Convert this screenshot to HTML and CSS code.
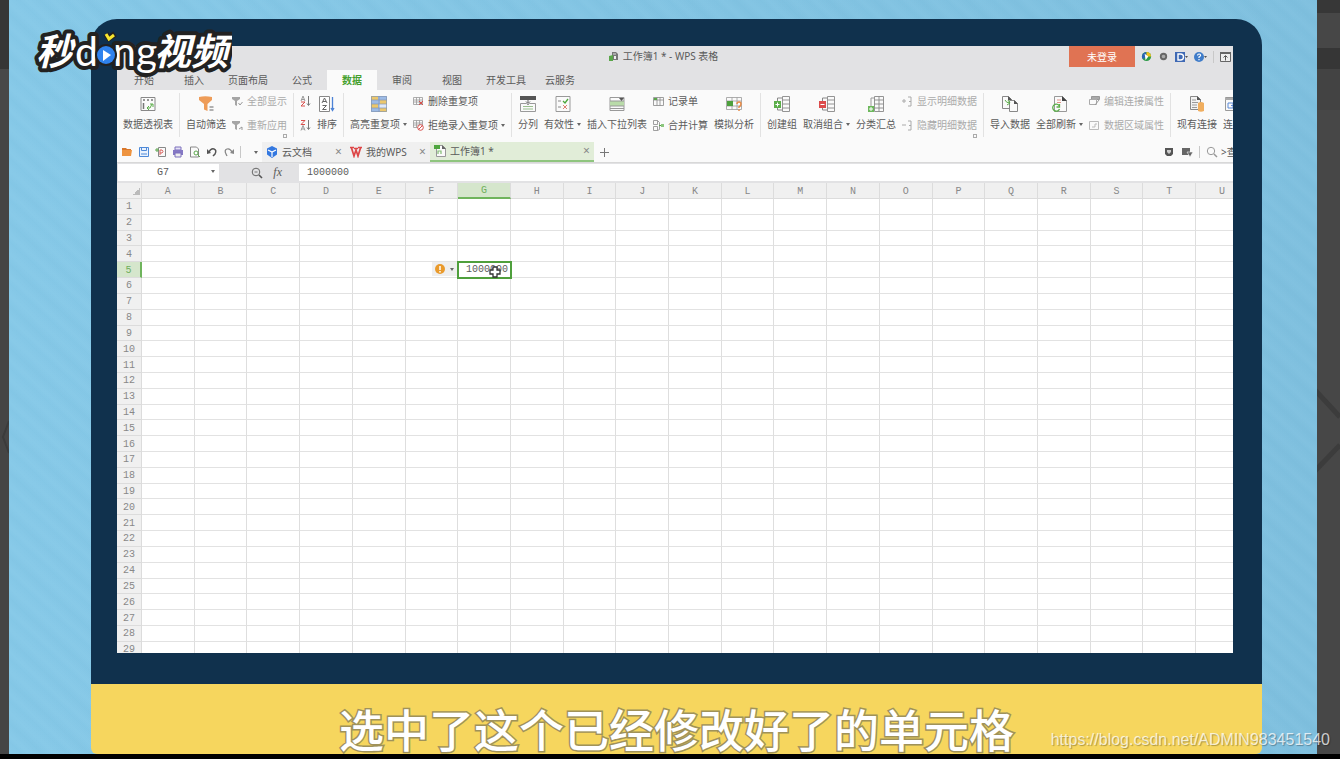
FILE: index.html
```
<!DOCTYPE html>
<html lang="zh-CN">
<head>
    <meta charset="UTF-8">
    <meta name="viewport" content="width=device-width, initial-scale=1.0">
    <title>工作簿1 - WPS 表格</title>
    <link rel="stylesheet" href="styles.css">
</head>
<body>
    <div class="stage">
        <div class="gutter gutter-left">
            <svg width="9" height="40" viewBox="0 0 9 40"><path d="M9 4L3 20L9 36" fill="none" stroke="#3b3b3b" stroke-width="2"/></svg>
        </div>
        <main class="video">
            <div class="frame">
                <div class="screen">
                    <!-- title bar -->
                    <div class="title-bar">
                        <div class="title">
                            <svg width="11" height="11" viewBox="0 0 11 11"><path d="M4 1h4l2 2v6H4z" fill="#777"/><path d="M5 3h3" stroke="#ddd"/><path d="M1 5l4-1v6H1z" fill="#5aa64a"/><path d="M6 5h2v3H6z" fill="#eee"/></svg>
                            <span>工作簿1 * - WPS 表格</span>
                        </div>
                        <div class="title-tools">
                            <button class="login">未登录</button>
                            <button aria-label="皮肤"><svg width="11" height="11" viewBox="0 0 12 12"><circle cx="6" cy="6" r="5" fill="#2d9a49"/><path d="M6 1A5 5 0 0 0 2 9L6 6z" fill="#2b62b5"/><path d="M6 1a5 5 0 0 1 5 5L6 6z" fill="#f2c11d"/><path d="M4 3l4 3-3 4z" fill="#fff"/></svg></button>
                            <button aria-label="设置"><svg width="11" height="11" viewBox="0 0 12 12"><circle cx="6" cy="6" r="3" fill="#aaa" stroke="#666" stroke-width="2"/></svg></button>
                            <button aria-label="文档"><svg width="13" height="12" viewBox="0 0 13 12"><path d="M0 1h10v10H0z" fill="#3f69b4"/><path d="M3 3h2.500q3 0 3 3t-3 3H3z" fill="none" stroke="#fff" stroke-width="1.400"/><path d="M10 5h3l-1.500 2z" fill="#555"/></svg></button>
                            <button aria-label="帮助"><svg width="13" height="12" viewBox="0 0 13 12"><circle cx="5" cy="6" r="5" fill="#3f7cc9"/><path d="M3.500 4.500q.2-1.500 1.600-1.500t1.500 1.300Q6.500 5.300 5 6v1M5 8v1.200" fill="none" stroke="#fff" stroke-width="1.200"/><path d="M10 5h3l-1.500 2z" fill="#555"/></svg></button>
                            <span class="split"></span>
                            <button aria-label="隐藏功能区"><svg width="11" height="12" viewBox="0 0 11 12"><path d="M.5 1.500h10v9H.5z" fill="#eee" stroke="#666"/><path d="M0 2h11" stroke="#666" stroke-width="2"/><path d="M5.500 9.500V5M3.500 6.500l2-2 2 2" fill="none" stroke="#555"/></svg></button>
                        </div>
                    </div>

                    <!-- menu tabs -->
                    <nav class="menu-tabs">
                        <button>开始</button>
                        <button>插入</button>
                        <button>页面布局</button>
                        <button>公式</button>
                        <button class="active">数据</button>
                        <button>审阅</button>
                        <button>视图</button>
                        <button>开发工具</button>
                        <button>云服务</button>
                    </nav>

                    <!-- ribbon -->
                    <div class="ribbon">
                        <div class="group">
                            <button class="big">
                                <svg viewBox="0 0 16 16"><path d="M1 1.500h14v13H1z" fill="#fbfbfb" stroke="#888"/><path d="M3 4h2M7 4h2M11 4h2M3.500 7v6" stroke="#777" stroke-width="1.500"/><path d="M7 12h3l2-4M7 12l2-2M7 12l2 2M10 8h3v3" fill="none" stroke="#5cae4a"/></svg>
                                <span>数据透视表</span>
                            </button>
                        </div>
                        <div class="group">
                            <button class="big">
                                <svg viewBox="0 0 16 16"><path d="M1 1q6-1.500 13 0v3L9.500 8v7L6 13.500V8L1 4z" fill="#ee9c58"/><path d="M11.500 11h4M11.500 14h4" stroke="#666"/></svg>
                                <span>自动筛选</span>
                            </button>
                            <div class="stack">
                                <button class="small off"><svg viewBox="0 0 11 11"><path d="M0 1h8v2L5 5v5L3 9V5L0 3z" fill="#a5a5a5"/><path d="M6.500 7l1.500 2 2.500-3" fill="none" stroke="#999"/></svg>全部显示</button>
                                <button class="small off"><svg viewBox="0 0 11 11"><path d="M0 1h8v2L5 5v5L3 9V5L0 3z" fill="#a5a5a5"/><path d="M7 9l3-2v3" fill="none" stroke="#999"/></svg>重新应用</button>
                            </div>
                            <span class="launcher"></span>
                        </div>
                        <div class="group">
                            <div class="stack">
                                <button class="small" aria-label="升序"><svg viewBox="0 0 11 11"><path d="M1 5l2-5 2 5M1.500 3.500h3" fill="none" stroke="#999"/><path d="M1 6h4l-4 4h4" fill="none" stroke="#d8504c"/><path d="M8.500 0v9M7 7.500l1.500 2L10 7.500" fill="none" stroke="#777"/></svg></button>
                                <button class="small" aria-label="降序"><svg viewBox="0 0 11 11"><path d="M1 .5h4l-4 4h4" fill="none" stroke="#d8504c"/><path d="M1 10.500l2-5 2 5M1.500 9h3" fill="none" stroke="#999"/><path d="M8.500 0v9M7 7.500l1.500 2L10 7.500" fill="none" stroke="#777"/></svg></button>
                            </div>
                            <button class="big">
                                <svg viewBox="0 0 16 16"><path d="M.5.5h10v15H.5z" fill="#fff" stroke="#888"/><path d="M3 7l2.500-5L8 7M4 5.500h3M3.500 9.500h4l-4 4h4" fill="none" stroke="#666"/><path d="M13.500 1v13M12 12l1.500 2.500L15 12" fill="none" stroke="#4d83d6" stroke-width="1.300"/></svg>
                                <span>排序</span>
                            </button>
                        </div>
                        <div class="group">
                            <button class="big">
                                <svg viewBox="0 0 16 16"><path d="M0 0h16v16H0z" fill="#9dbbe6"/><path d="M0 0h7v4H0zM9 4h7v4H9zM0 8h7v4H0zM9 12h7v4H9z" fill="#ecc76c"/><path d="M8 8h8v4H8z" fill="#dfe9f8"/><path d="M0 4h16M0 8h16M0 12h16M8 0v16M.5.5h15v15H.5z" fill="none" stroke="#8497b0" stroke-width=".7"/></svg>
                                <span class="drop">高亮重复项</span>
                            </button>
                            <div class="stack">
                                <button class="small"><svg viewBox="0 0 11 11"><path d="M.5 1.500h9v7h-9zM.5 4h9M.5 6h9M3.500 1.500v7M6.500 1.500v7" fill="#fafafa" stroke="#999" stroke-width=".8"/><path d="M6 5l4 4M10 5l-4 4" stroke="#d8504c"/></svg>删除重复项</button>
                                <button class="small"><svg viewBox="0 0 11 11"><path d="M.5.5h9v7h-9zM.5 3h9M.5 5h9M3.500.5v7M6.500.5v7" fill="#fafafa" stroke="#999" stroke-width=".8"/><circle cx="7.500" cy="7.500" r="2.800" fill="#fff" stroke="#d8504c"/><path d="M5.500 9.500l4-4" stroke="#d8504c"/></svg><span class="drop">拒绝录入重复项</span></button>
                            </div>
                        </div>
                        <div class="group">
                            <button class="big">
                                <svg viewBox="0 0 16 16"><path d="M0 0h16v4H0z" fill="#555"/><path d="M8 4v3M6 5.500l2 2 2-2" fill="none" stroke="#666"/><path d="M.5 7.500h6L8 9l1.500-1.500h6v8H.5z" fill="#fafafa" stroke="#999"/><path d="M3 10.500h10M3 13h10" stroke="#9ac08e"/></svg>
                                <span>分列</span>
                            </button>
                            <button class="big">
                                <svg viewBox="0 0 16 16"><path d="M1 .5h14v15H1z" fill="#fafafa" stroke="#999"/><path d="M8 5l2 2 3-4" fill="none" stroke="#4da63c" stroke-width="1.300"/><path d="M8 9l4 4M12 9l-4 4" stroke="#df7d72"/><path d="M3 5h3M3 11h3" stroke="#888"/></svg>
                                <span class="drop">有效性</span>
                            </button>
                            <button class="big">
                                <svg viewBox="0 0 16 16"><path d="M1 1.500h14v13H1z" fill="#fafafa" stroke="#999"/><path d="M1 5h14v5H1z" fill="#b9dba9"/><path d="M1 5h14M1 10h14M1 12.500h14" stroke="#999"/><path d="M10 2h5l-2.500 3z" fill="#555"/></svg>
                                <span>插入下拉列表</span>
                            </button>
                            <div class="stack">
                                <button class="small"><svg viewBox="0 0 11 11"><path d="M.5 1.500h10v8H.5zM.5 4h10M4 1.500v8M7 1.500v8" fill="#fafafa" stroke="#888" stroke-width=".8"/><path d="M1 2h3v2H1z" fill="#5aa64a"/></svg>记录单</button>
                                <button class="small"><svg viewBox="0 0 11 11"><path d="M.5.5h4v4h-4zM.5 6.500h4v4h-4zM4.500.5l2 2v7l-2 1" fill="#fafafa" stroke="#888" stroke-width=".8"/><path d="M6 5.500h3" stroke="#5aa64a"/><path d="M8 4h3v3H8z" fill="#8bc67d"/></svg>合并计算</button>
                            </div>
                            <button class="big">
                                <svg viewBox="0 0 16 16"><path d="M.5 1.500h15v12H.5zM.5 5h15M.5 10h15M6 1.500v12M11 1.500v12" fill="#fafafa" stroke="#999" stroke-width=".8"/><path d="M1 5h6v5H1z" fill="#4da03d"/><path d="M11 8q0-2 2-2t2 2-2 3v1M13 13.500V15" fill="none" stroke="#e78b47" stroke-width="1.500"/></svg>
                                <span>模拟分析</span>
                            </button>
                        </div>
                        <div class="group">
                            <button class="big">
                                <svg viewBox="0 0 16 16"><path d="M8.500.5h7v15h-7zM8.500 4h7M8.500 8h7M8.500 12h7" fill="#fafafa" stroke="#888" stroke-width=".9"/><path d="M8 2H3.500v12H8" fill="none" stroke="#888"/><path d="M0 5h7v7H0z" fill="#5cae4a"/><path d="M3.500 6.500v4M1.500 8.500h4" stroke="#fff"/></svg>
                                <span>创建组</span>
                            </button>
                            <button class="big">
                                <svg viewBox="0 0 16 16"><path d="M8.500.5h7v15h-7zM8.500 4h7M8.500 8h7M8.500 12h7" fill="#fafafa" stroke="#888" stroke-width=".9"/><path d="M8 2H3.500v12H8" fill="none" stroke="#888"/><path d="M0 5h7v7H0z" fill="#dc4c4c"/><path d="M1.500 8.500h4" stroke="#fff"/></svg>
                                <span class="drop">取消组合</span>
                            </button>
                            <button class="big">
                                <svg viewBox="0 0 16 16"><path d="M6.500.5h9v15h-9zM6.500 4h9M6.500 8h9M6.500 12h9M11 .5v15" fill="#fafafa" stroke="#888" stroke-width=".9"/><path d="M6 2H3v8" fill="none" stroke="#999"/><path d="M0 10h6v6H0z" fill="#6db85c"/><path d="M3 11v4M1 13h4" stroke="#fff"/></svg>
                                <span>分类汇总</span>
                            </button>
                            <div class="stack">
                                <button class="small off"><svg viewBox="0 0 11 11"><path d="M0 5h4M2 3v4M6 1h3v9H6M7 5.500h2" fill="none" stroke="#aaa"/></svg>显示明细数据</button>
                                <button class="small off"><svg viewBox="0 0 11 11"><path d="M0 5h4M6 1h3v9H6M7 5.500h2" fill="none" stroke="#aaa"/></svg>隐藏明细数据</button>
                            </div>
                            <span class="launcher"></span>
                        </div>
                        <div class="group">
                            <button class="big">
                                <svg viewBox="0 0 16 16"><path d="M.5.5h6l3 3v9h-9z" fill="#fafafa" stroke="#888"/><path d="M7.500 4.500h5l3 3v8h-8z" fill="#fafafa" stroke="#888"/><path d="M6 0l4 4H6zM12 4l4 4h-4z" fill="#555"/><path d="M3 4q1 3 5 3M6 4l2 3-3 2" fill="none" stroke="#5cae4a"/></svg>
                                <span>导入数据</span>
                            </button>
                            <button class="big">
                                <svg viewBox="0 0 16 16"><path d="M2.500.5h8l4 4v11h-12z" fill="#fafafa" stroke="#999"/><path d="M10 0l5 5h-5z" fill="#444"/><path d="M5 4h4M5 6.500h4" stroke="#e0938a"/><path d="M7 9.500A3.500 3.500 0 1 0 7.500 13M7.500 8v3h-3" fill="none" stroke="#5cae4a" stroke-width="1.300"/></svg>
                                <span class="drop">全部刷新</span>
                            </button>
                            <div class="stack">
                                <button class="small off"><svg viewBox="0 0 11 11"><path d="M2.500.5h8v3h-8z" fill="#aaa" stroke="#999"/><path d="M.5 3.500h7v5h-7z" fill="#fafafa" stroke="#aaa"/><path d="M6 9l4-5" stroke="#999"/></svg>编辑连接属性</button>
                                <button class="small off"><svg viewBox="0 0 11 11"><path d="M.5 1.500h9v8h-9z" fill="#fafafa" stroke="#bbb"/><path d="M3 7h3V4h2" fill="none" stroke="#bbb"/></svg>数据区域属性</button>
                            </div>
                        </div>
                        <div class="group">
                            <button class="big">
                                <svg viewBox="0 0 16 16"><path d="M1.500.5h7l3 3v10h-10z" fill="#f2f2f2" stroke="#888"/><path d="M8 0l4 4H8z" fill="#555"/><path d="M3 4h4M3 6.500h6M3 9h5M3 11.500h5" stroke="#999"/><path d="M9 7q3-2 6 0v8q-3 1.500-6 0z" fill="#f0ae5f"/></svg>
                                <span>现有连接</span>
                            </button>
                            <button class="big">
                                <svg viewBox="0 0 16 16"><path d="M.5 1.500h15v13H.5z" fill="#fafafa" stroke="#999"/><path d="M0 3h16" stroke="#aaa" stroke-width="2"/><path d="M3 7h5v5H3zM6 9.500h6M10 7h5v5h-5z" fill="none" stroke="#5b8ad8"/></svg>
                                <span>连接</span>
                            </button>
                        </div>
                    </div>

                    <!-- quick access + document tabs -->
                    <div class="doc-bar">
                        <div class="quick">
                            <button aria-label="打开"><svg viewBox="0 0 12 12"><path d="M1 2h4l1 1h4v2H1z" fill="#d9772b"/><path d="M1 10V4h10l-1 6z" fill="#ee9440"/></svg></button>
                            <button aria-label="保存"><svg viewBox="0 0 12 12"><path d="M1.500 1.500h9v9h-9z" fill="#eaf2fd" stroke="#4f8ad8"/><path d="M3.500 1.500v3h5v-3M3 8h6" fill="none" stroke="#4f8ad8"/></svg></button>
                            <button aria-label="输出为PDF"><svg viewBox="0 0 12 12"><path d="M3.500 1.500h7v9h-7z" fill="#fafafa" stroke="#888"/><path d="M5 9V4h2q2 1.500 0 3H5" fill="none" stroke="#d9605c"/><path d="M0 4h4M2 2v4" stroke="#5aa64a"/></svg></button>
                            <button aria-label="打印"><svg viewBox="0 0 12 12"><path d="M3 1h6v3H3z" fill="#e5e2f5" stroke="#7d71bd"/><path d="M1 4h10v5H1z" fill="#8578c4"/><path d="M3 7h6v4H3z" fill="#eee" stroke="#7d71bd"/></svg></button>
                            <button aria-label="打印预览"><svg viewBox="0 0 12 12"><path d="M1.500 1h6l2 2v8h-8z" fill="#fafafa" stroke="#888"/><circle cx="7" cy="7" r="2" fill="#fff" stroke="#5aa64a"/><path d="M8.500 8.500L11 11" stroke="#5aa64a"/></svg></button>
                            <button aria-label="撤销"><svg viewBox="0 0 12 12"><path d="M3 6q2-4 5-3t1 5l-2 2" fill="none" stroke="#555" stroke-width="1.500"/><path d="M1 3v5l4-1z" fill="#555"/></svg></button>
                            <button aria-label="恢复"><svg viewBox="0 0 12 12"><path d="M9 6Q7 2 4 3T3 8l1 2" fill="none" stroke="#888" stroke-width="1.300"/><path d="M11 3v5L7 7z" fill="#888"/></svg></button>
                            <span class="split"></span>
                            <button class="more" aria-label="更多"></button>
                        </div>
                        <div class="doc-tabs">
                            <div class="doc-tab">
                                <button class="doc-name"><svg viewBox="0 0 12 12"><path d="M6 0l5 2.500v6L6 12 1 8.500v-6z" fill="#3478e0"/><path d="M2 4l4 2 4-2M6 6v5" fill="none" stroke="#fff" stroke-width="1.200"/></svg>云文档</button>
                                <button class="close" aria-label="关闭云文档">×</button>
                            </div>
                            <div class="doc-tab">
                                <button class="doc-name"><svg viewBox="0 0 12 12"><path d="M0 1.500h4M8 1.500h4M1.500 2l2.500 8 2-6 2 6 2.500-8M4 2.500h4" fill="none" stroke="#dd4647" stroke-width="1.700"/></svg>我的WPS</button>
                                <button class="close" aria-label="关闭我的WPS">×</button>
                            </div>
                            <div class="doc-tab current">
                                <button class="doc-name"><svg viewBox="0 0 12 12"><path d="M2.500.5h6l3 3v8h-9z" fill="#fafafa" stroke="#999"/><path d="M0 0h6v4H0z" fill="#4da63c"/><path d="M8 0l4 4H8z" fill="#666"/><path d="M4 9V6h3v3" fill="none" stroke="#82bd72" stroke-width="1.200"/></svg>工作簿1 *</button>
                                <button class="close" aria-label="关闭工作簿1">×</button>
                            </div>
                            <button class="add" aria-label="新建"><svg width="11" height="11" viewBox="0 0 11 11"><path d="M5.500 1v9M1 5.500h9" stroke="#777"/></svg></button>
                        </div>
                        <div class="doc-tools">
                            <button aria-label="任务窗格"><svg viewBox="0 0 12 12"><path d="M2 2h8v6L8 10H4L2 8z" fill="#555"/><path d="M4 4h4v2L6 8 4 6z" fill="#ccc"/></svg></button>
                            <button aria-label="窗口列表"><svg viewBox="0 0 12 12"><path d="M1 2h8v7H1z" fill="#666"/><path d="M6 6h6L9 11z" fill="#666" stroke="#fafafa" stroke-width=".6"/></svg></button>
                            <span class="split"></span>
                            <button aria-label="查找"><svg viewBox="0 0 12 12"><circle cx="5" cy="5" r="3.700" fill="none" stroke="#999"/><path d="M8 8l3 3" stroke="#999" stroke-width="1.500"/></svg></button>
                            <span class="find">&gt;查</span>
                        </div>
                    </div>

                    <!-- formula bar -->
                    <div class="formula-bar">
                        <div class="name-box">
                            <input type="text" value="G7" aria-label="名称框">
                            <button class="more" aria-label="名称列表"></button>
                        </div>
                        <div class="formula-tools">
                            <button aria-label="浏览公式结果"><svg width="12" height="12" viewBox="0 0 12 12"><circle cx="5" cy="5" r="3.800" fill="none" stroke="#666"/><path d="M8 8l3 3" stroke="#555" stroke-width="1.600"/><path d="M3.500 5h3" stroke="#777"/></svg></button>
                            <button class="fx">fx</button>
                        </div>
                        <input class="formula" type="text" value="1000000" aria-label="编辑栏">
                    </div>

                    <div class="sheet">
                        <table id="grid"></table>
                    </div>
                </div>
            </div>
            <div class="caption">选中了这个已经修改好了的单元格</div>
        </main>
        <div class="gutter gutter-right">
            <svg width="23" height="90" viewBox="0 0 23 90"><path d="M-2 4L23 31M23 59L-2 85" fill="none" stroke="#3c3c3c" stroke-width="5"/></svg>
        </div>

        <svg class="logo" width="200" height="56" viewBox="0 0 200 56" role="img" aria-label="秒dong视频">
            <g class="logo-text">
                <text class="logo-cjk" x="4" y="39">秒</text>
                <text class="logo-latin" x="43" y="40">d</text>
                <text class="logo-latin" x="81" y="40">ng</text>
                <text class="logo-cjk" x="122" y="39">视频</text>
            </g>
            <circle cx="74" cy="29" r="11" fill="#222"/>
            <circle cx="74" cy="29" r="9" fill="#2f83ee"/>
            <path d="M71 24l8 5-8 6z" fill="#fff"/>
            <path d="M74 8l3 4 6-4" fill="none" stroke="#222" stroke-width="6"/>
            <path d="M74 8l3 5 5-4" fill="none" stroke="#f7e62e" stroke-width="3"/>
        </svg>
        <a class="watermark" href="https://blog.csdn.net/ADMIN983451540">https://blog.csdn.net/ADMIN983451540</a>
    </div>

    <script>
        const COLS = 'ABCDEFGHIJKLMNOPQRSTU'.split('');
        const ROWS = 29;
        const current = { col: 'G', row: 5, value: '1000000' };

        // Header row
        let html = '<thead><tr><th class="corner"></th>';
        COLS.forEach((c) => {
            html += '<th' + (c === current.col ? ' class="on"' : '') + '>' + c + '</th>';
        });
        html += '</tr></thead><tbody>';

        // Cells
        for (let r = 1; r <= ROWS; r++) {
            html += '<tr><th' + (r === current.row ? ' class="on"' : '') + '>' + r + '</th>';
            COLS.forEach((c) => {
                if (r === current.row && c === current.col) {
                    html += '<td class="selected"><div class="cell">' + current.value +
                        '<button class="warn" aria-label="错误检查"><svg width="10" height="10" viewBox="0 0 10 10"><circle cx="5" cy="5" r="5" fill="#e99a2c"/><path d="M5 2v4M5 7v1.500" stroke="#fff" stroke-width="1.500"/></svg><i class="arrow"></i></button>' +
                        '<svg class="cursor" width="12" height="12" viewBox="0 0 12 12"><path d="M4 1h4v3h3v4H8v3H4V8H1V4h3z" fill="#fff" stroke="#333" stroke-width="1.300"/></svg></div></td>';
                } else {
                    html += '<td></td>';
                }
            });
            html += '</tr>';
        }
        document.getElementById('grid').innerHTML = html + '</tbody>';
    </script>
</body>
</html>
```
FILE: styles.css
```
*,
*::after {
    box-sizing: border-box;
}

body {
    margin: 0;
    height: 100vh;
    padding-bottom: 5px;
    background: #000;
    overflow: hidden;
    font-family: "Noto Sans", "Noto Sans CJK SC", sans-serif;
    font-size: 10px;
    line-height: 14px;
    color: #5a5a5a;
}

button,
input {
    margin: 0;
    padding: 0;
    border: 0;
    background: none;
    font: inherit;
    color: inherit;
    white-space: nowrap;
}

svg {
    display: block;
    flex: none;
}

.stage {
    position: relative;
    display: flex;
    height: 100%;
}

/* dark strips on both sides of the video */
.gutter {
    flex: none;
    display: flex;
    align-items: center;
}

.gutter-left {
    width: 9px;
    padding-top: 120px;
    background: linear-gradient(#363636 69px, #484848 69px, #484848 110px, #454545 110px);
}

.gutter-right {
    width: 23px;
    padding-top: 108px;
    background: linear-gradient(#373737 13px, #474747 13px, #474747 48px, #363636 48px, #363636 69px, #434343 69px, #434343 110px, #474747 110px);
}

.video {
    flex: 1;
    min-width: 0;
    display: flex;
    flex-direction: column;
    padding: 19px 55px 0 82px;
    background:
        repeating-linear-gradient(42deg, rgba(255, 255, 255, 0.02) 0, rgba(0, 60, 90, 0.01) 9px, rgba(255, 255, 255, 0.02) 14px, rgba(0, 60, 90, 0.02) 23px, rgba(255, 255, 255, 0.02) 31px),
        linear-gradient(90deg, #86c9e8, #7fc0df);
}

.frame {
    flex: 1;
    min-height: 0;
    display: flex;
    padding: 27px 29px 31px 26px;
    border-radius: 26px 26px 0 0;
    background: #10314d;
}

.screen {
    flex: 1;
    min-width: 0;
    display: flex;
    flex-direction: column;
    overflow: hidden;
    background: #fafafa;
}

/* title bar */
.title-bar {
    flex: none;
    display: grid;
    grid-template-columns: 1fr auto 1fr;
    height: 24px;
    background: #e2e2e4;
}

.title {
    grid-column: 2;
    display: flex;
    align-items: center;
    gap: 4px;
    height: 20px;
    padding-right: 24px;
}

.title-tools {
    display: flex;
    justify-content: flex-end;
    align-items: center;
    gap: 6px;
    height: 21px;
    padding-right: 2px;
}

.login {
    width: 66px;
    height: 21px;
    background: #e07353;
    color: #fff;
}

.split {
    flex: none;
    width: 1px;
    height: 12px;
    background: #c8c8c8;
}

/* menu tabs */
.menu-tabs {
    flex: none;
    display: flex;
    height: 20px;
    padding-left: 2px;
    background: #e2e2e4;
}

.menu-tabs button {
    min-width: 50px;
    padding: 0 9px;
}

.menu-tabs .active {
    background: #fafafa;
    color: #45a02e;
    font-weight: bold;
}

/* ribbon */
.ribbon {
    flex: none;
    display: flex;
    height: 52px;
    padding-top: 3px;
}

.group {
    position: relative;
    flex: none;
    display: flex;
    gap: 6px;
    height: 44px;
    padding: 0 6px;
    border-right: 1px solid #e2e2e2;
}

.group:last-child {
    border-right: 0;
}

.big {
    display: flex;
    flex-direction: column;
    align-items: center;
    gap: 5px;
    padding-top: 3px;
}

.big svg {
    width: 16px;
    height: 16px;
}

.stack {
    display: flex;
    flex-direction: column;
    gap: 10px;
    padding-top: 1px;
}

.small {
    display: flex;
    align-items: center;
    gap: 4px;
    height: 14px;
}

.small svg {
    width: 11px;
    height: 11px;
}

.off {
    color: #aaa;
}

.drop::after,
.more::after,
.arrow {
    content: "";
    display: inline-block;
    width: 4px;
    margin-left: 3px;
    border: solid transparent;
    border-width: 3px 2px 0;
    border-top-color: #666;
    vertical-align: 2px;
}

.launcher {
    position: absolute;
    right: 6px;
    bottom: -1px;
    width: 4px;
    height: 4px;
    border: 1px solid #aaa;
}

/* quick access and document tabs */
.doc-bar {
    flex: none;
    display: flex;
    height: 21px;
    border-bottom: 1px solid #d8d8d8;
}

.quick,
.doc-tools {
    flex: none;
    display: flex;
    align-items: center;
    gap: 5px;
    padding-left: 4px;
}

.quick svg,
.doc-tabs .doc-name svg,
.doc-tools svg {
    width: 12px;
    height: 12px;
}

.quick .more {
    width: 16px;
}

.doc-tabs {
    flex: 1;
    display: flex;
}

.doc-tab {
    display: flex;
    justify-content: space-between;
    align-items: center;
    width: 84px;
    padding: 0 4px;
    background: #f0f0f0;
}

.doc-tab.current {
    width: 164px;
    border-bottom: 2px solid #8fc57f;
    background: #e1edd8;
}

.doc-name {
    display: flex;
    align-items: center;
    gap: 4px;
}

.close {
    width: 7px;
    font-size: 12px;
    color: #888;
}

.add {
    padding: 0 5px;
}

.doc-tools {
    gap: 6px;
}

.find {
    width: 12px;
    margin-left: -3px;
    overflow: hidden;
    white-space: nowrap;
}

/* formula bar */
.formula-bar {
    flex: none;
    display: flex;
    height: 20px;
    padding: 1px 0 2px 1px;
    background: #e2e2e4;
    font-family: "Liberation Mono", monospace;
}

.name-box {
    display: flex;
    align-items: center;
    width: 101px;
    background: #fff;
}

.name-box input {
    width: 90px;
    text-align: center;
}

.formula-tools {
    display: flex;
    align-items: center;
    justify-content: flex-end;
    gap: 10px;
    width: 80px;
    padding-right: 17px;
}

.fx {
    font: italic 12px "Liberation Serif", serif;
}

.formula {
    flex: 1;
    min-width: 0;
    padding-left: 8px;
    background: #fff;
}

/* sheet */
.sheet {
    flex: 1;
    min-height: 0;
    overflow: hidden;
    background: #fff;
}

#grid {
    width: calc(100% + 16px);
    height: 475px;
    table-layout: fixed;
    border-spacing: 0;
    font-family: "Liberation Mono", monospace;
    line-height: 12px;
}

#grid th {
    padding: 2px 0 0;
    border-right: 1px solid #dcdcdc;
    border-bottom: 1px solid #dcdcdc;
    background: #f0f0f0;
    font-weight: normal;
    color: #888;
}

#grid td {
    padding: 0;
    border-right: 1px solid #dedede;
    border-bottom: 1px solid #e2e2e2;
}

#grid thead th {
    height: 16px;
}

#grid .corner {
    width: 25px;
    background: linear-gradient(135deg, transparent 50%, #bbb 50%) 16px 5px / 7px 7px no-repeat #f0f0f0;
}

#grid .on {
    background: #d5e6cc;
    color: #6fae5c;
}

#grid thead .on {
    border-bottom: 2px solid #6fb45c;
}

#grid tbody .on {
    border-right: 2px solid #6fb45c;
}

.selected {
    outline: 2px solid #4f9f3c;
    outline-offset: -1px;
}

.cell {
    position: relative;
    padding: 1px 2px 0 0;
    text-align: right;
}

.warn {
    position: absolute;
    top: -1px;
    right: calc(100% + 1px);
    display: flex;
    align-items: center;
    gap: 2px;
    width: 25px;
    height: 14px;
    padding-left: 3px;
    background: #efefef;
}

.cursor {
    position: absolute;
    right: 9px;
    top: 3px;
}

/* subtitles */
.caption {
    flex: none;
    height: 70px;
    padding-top: 14px;
    border-radius: 0 0 6px 6px;
    background: #f6d65e;
    font-family: "Noto Sans CJK SC", sans-serif;
    font-size: 45px;
    font-weight: 500;
    line-height: 62px;
    text-align: center;
    white-space: nowrap;
    overflow: hidden;
    color: #fff;
    -webkit-text-stroke: 3px #a0925a;
    paint-order: stroke fill;
}

.logo {
    position: absolute;
    left: 32px;
    top: 26px;
}

.logo-text {
    fill: #fff;
    stroke: #222;
    stroke-width: 8px;
    stroke-linejoin: round;
    paint-order: stroke fill;
    font-weight: bold;
}

.logo-cjk {
    font-family: "Noto Sans CJK SC", sans-serif;
    font-size: 37px;
    font-style: italic;
}

.logo-latin {
    font-family: Lato, sans-serif;
    font-size: 41px;
    font-weight: normal;
}

.watermark {
    position: absolute;
    right: 10px;
    bottom: 4px;
    font-family: "Liberation Sans", sans-serif;
    font-size: 16px;
    line-height: 20px;
    text-decoration: none;
    color: rgba(255, 255, 255, 0.75);
    text-shadow: 1px 1px 1px rgba(0, 0, 0, 0.3);
}
```
